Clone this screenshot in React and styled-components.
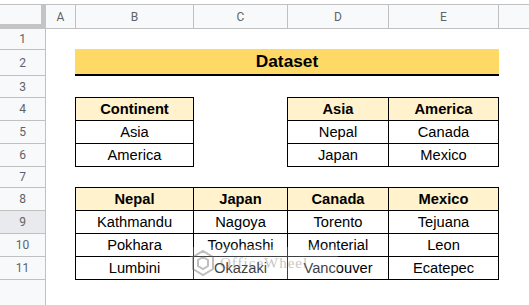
import React from "react";
import styled, { createGlobalStyle } from "styled-components";

const GlobalStyle = createGlobalStyle`
  html, body {
    margin: 0;
    padding: 0;
    background: #ffffff;
    overflow: hidden;
  }
  body {
    font-family: "Liberation Sans", Arial, sans-serif;
  }
`;

const Page = styled.div`
  position: relative;
  width: 529px;
  height: 305px;
  padding-top: 4px;
  box-sizing: border-box;
  background: #ffffff;
`;

const Sheet = styled.div`
  display: grid;
  grid-template-columns: 46px 30px 118px 94px 101px 110px 1fr;
  grid-template-rows: 25px 21px 26px 22px 23px 23px 23px 21px 23px 23px 23px 23px 1fr;
  height: 100%;
`;

const Corner = styled.div`
  grid-column: 1;
  grid-row: 1;
  box-sizing: border-box;
  background: #f8f9fa;
  border-top: 1px solid #c0c0c0;
  border-right: 5px solid #c4c4c4;
  border-bottom: 5px solid #c4c4c4;
`;

const ColHeader = styled.div`
  grid-row: 1;
  grid-column: ${(p) => p.$col};
  display: flex;
  align-items: center;
  justify-content: center;
  box-sizing: border-box;
  background: #f8f9fa;
  border-top: 1px solid #c0c0c0;
  border-bottom: 1px solid #c0c0c0;
  border-right: ${(p) => (p.$last ? "none" : "1px solid #c0c0c0")};
  font-family: Roboto, "Liberation Sans", sans-serif;
  font-size: 12px;
  color: #5f6368;
`;

const RowHeader = styled.div`
  grid-column: 1;
  grid-row: ${(p) => p.$row};
  display: flex;
  align-items: center;
  justify-content: center;
  box-sizing: border-box;
  background: ${(p) => (p.$active ? "#e8eaed" : "#f8f9fa")};
  border-right: 1px solid #c0c0c0;
  border-bottom: ${(p) => (p.$filler ? "none" : "1px solid #c0c0c0")};
  font-family: Roboto, "Liberation Sans", sans-serif;
  font-size: 12px;
  color: #5f6368;
`;

const TitleBar = styled.div`
  grid-column: 3 / 7;
  grid-row: 3;
  margin: -1px 0 0 -1px;
  display: flex;
  align-items: center;
  justify-content: center;
  background: #ffd966;
  border-bottom: 2px solid #000000;
  font-size: 17.3px;
  font-weight: 700;
  color: #000000;
`;

const Cell = styled.div`
  grid-column: ${(p) => p.$col};
  grid-row: ${(p) => p.$row};
  margin: -1px 0 0 -1px;
  display: flex;
  align-items: center;
  justify-content: center;
  border: 1px solid #000000;
  background: ${(p) => (p.$head ? "#fff2cc" : "#ffffff")};
  font-size: 14.7px;
  font-weight: ${(p) => (p.$head ? 700 : 400)};
  color: #000000;
  white-space: nowrap;
`;

const Watermark = styled.div`
  position: absolute;
  left: 190px;
  top: 247px;
  width: 148px;
  height: 32px;
  display: flex;
  align-items: center;
  gap: 4px;
  background: rgba(255, 255, 255, 0.45);
  opacity: 0.55;
  pointer-events: none;
`;

const WatermarkText = styled.span`
  font-family: "Liberation Serif", serif;
  font-size: 15px;
  color: #9a9a9a;
  letter-spacing: 1px;
`;

const columns = ["A", "B", "C", "D", "E", ""];

const tables = [
  {
    col: 3,
    row: 5,
    rows: [["Continent"], ["Asia"], ["America"]],
  },
  {
    col: 5,
    row: 5,
    rows: [
      ["Asia", "America"],
      ["Nepal", "Canada"],
      ["Japan", "Mexico"],
    ],
  },
  {
    col: 3,
    row: 9,
    rows: [
      ["Nepal", "Japan", "Canada", "Mexico"],
      ["Kathmandu", "Nagoya", "Torento", "Tejuana"],
      ["Pokhara", "Toyohashi", "Monterial", "Leon"],
      ["Lumbini", "Okazaki", "Vancouver", "Ecatepec"],
    ],
  },
];

const App = () => {
  return (
    <Page>
      <GlobalStyle />
      <Sheet>
        <Corner />
        {columns.map((c, i) => (
          <ColHeader key={i} $col={i + 2} $last={i === columns.length - 1}>
            {c}
          </ColHeader>
        ))}
        {Array.from({ length: 11 }, (_, i) => (
          <RowHeader key={i} $row={i + 2} $active={i + 1 === 9}>
            {i + 1}
          </RowHeader>
        ))}
        <RowHeader $row={13} $filler />

        <TitleBar>Dataset</TitleBar>

        {tables.map((t, ti) =>
          t.rows.map((r, ri) =>
            r.map((text, ci) => (
              <Cell
                key={`${ti}-${ri}-${ci}`}
                $col={t.col + ci}
                $row={t.row + ri}
                $head={ri === 0}
              >
                {text}
              </Cell>
            ))
          )
        )}
      </Sheet>

      <Watermark>
        <svg width="26" height="28" viewBox="0 0 26 28">
          <path
            d="M13 2 L23 8 L23 20 L13 26 L3 20 L3 8 Z M13 8 L18 11 L18 17 L13 20 L8 17 L8 11 Z"
            fill="none"
            stroke="#8a8a8a"
            strokeWidth="2"
          />
        </svg>
        <WatermarkText>OfficeWheel</WatermarkText>
      </Watermark>
    </Page>
  );
};

export default App;
